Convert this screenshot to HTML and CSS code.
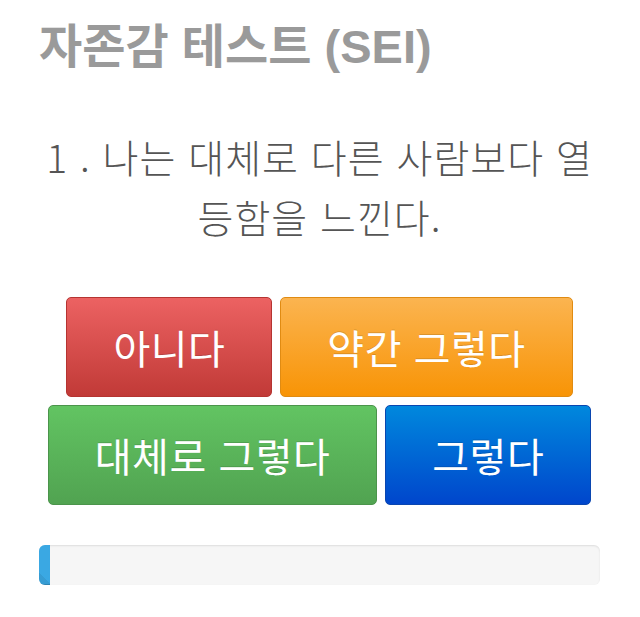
FILE: index.html
```html
<!DOCTYPE html>
<html lang="ko">
<head>
    <meta charset="UTF-8">
    <meta name="viewport" content="width=device-width, initial-scale=1.0">
    <title>자존감 테스트 (SEI)</title>
    <link rel="stylesheet" href="styles.css">
</head>
<body>
    <div class="container">
        <h1 class="title">자존감 테스트 (SEI)</h1>

        <!-- 질문 -->
        <p class="question">1 . 나는 대체로 다른 사람보다 열등함을 느낀다.</p>

        <!-- 답변 버튼 -->
        <div class="answers">
            <button class="btn btn-red">아니다</button>
            <button class="btn btn-orange">약간 그렇다</button>
            <button class="btn btn-green">대체로 그렇다</button>
            <button class="btn btn-blue">그렇다</button>
        </div>

        <!-- 진행 상황 -->
        <div class="progress">
            <div class="progress-bar" style="width: 2%;"></div>
        </div>
    </div>
</body>
</html>
```

FILE: styles.css
```css
* {
    margin: 0;
    padding: 0;
    box-sizing: border-box;
}

body {
    font-family: 'Liberation Sans', 'Noto Sans CJK KR', sans-serif;
    background: #fff;
}

.container {
    padding: 16px 40px 0 39px;
}

.title {
    font-size: 47px;
    font-weight: bold;
    color: #9a9a9a;
    line-height: 62px;
}

.question {
    margin-top: 48px;
    text-align: center;
    font-family: 'Noto Sans CJK KR', sans-serif;
    font-weight: 300;
    font-size: 39px;
    line-height: 60px;
    letter-spacing: 1px;
    color: #555;
}

.answers {
    margin-top: 51px;
    text-align: center;
    font-size: 0;
    margin-left: -20px;
    margin-right: -20px;
}

.btn {
    display: inline-block;
    margin: 0 4px 8px;
    padding: 24px 46px;
    font-family: 'Noto Sans CJK KR', sans-serif;
    font-size: 40px;
    line-height: 50px;
    letter-spacing: 0.5px;
    color: #fff;
    border: 1px solid;
    border-radius: 5px;
    cursor: pointer;
    text-shadow: 0 -1px 0 rgba(0, 0, 0, 0.15);
}

.btn-red {
    background: linear-gradient(#ec6262, #c13a37);
    border-color: #b53431;
}

.btn-orange {
    background: linear-gradient(#fbb450, #f89406);
    border-color: #e08b12;
}

.btn-green {
    background: linear-gradient(#62c462, #51a351);
    border-color: #4b944b;
}

.btn-blue {
    background: linear-gradient(#0088dd, #0046cc);
    border-color: #0a46b0;
}

.progress {
    margin-top: 32px;
    height: 40px;
    background: #f6f6f6;
    border-radius: 6px;
    box-shadow: inset 0 1px 2px rgba(0, 0, 0, 0.1);
    overflow: hidden;
}

.progress-bar {
    height: 100%;
    background-color: #3aa8e3;
    background-image: linear-gradient(45deg, rgba(0, 0, 0, 0.07) 25%, transparent 25%);
    box-shadow: inset 0 -1px 0 rgba(0, 0, 0, 0.15);
}
```
